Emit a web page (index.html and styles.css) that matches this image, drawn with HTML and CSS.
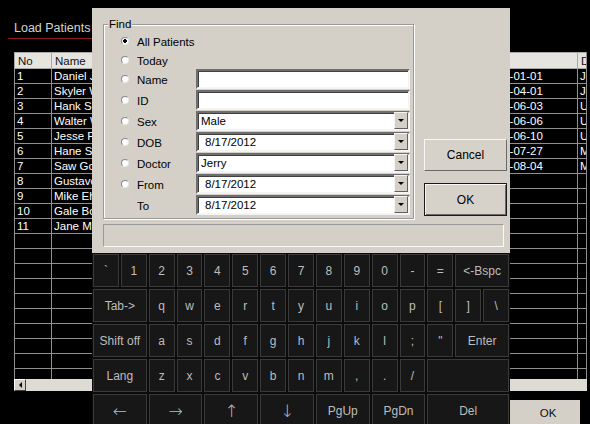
FILE: index.html
```html
<!DOCTYPE html>
<html>
<head>
<meta charset="utf-8">
<link rel="stylesheet" href="styles.css">
</head>
<body>
<div class="main">
  <div class="title">Load Patients</div>
  <div class="grid-wrap">
    <table class="grid">
      <colgroup>
        <col class="c-no"><col class="c-name"><col class="c-sex"><col class="c-dob"><col class="c-addr"><col class="c-date"><col class="c-doc">
      </colgroup>
      <thead>
        <tr><th>No</th><th>Name</th><th>Sex</th><th>DOB</th><th>Address</th><th>Visit</th><th>Doctor</th></tr>
      </thead>
      <tbody>
        <tr><td>1</td><td>Daniel Jackson</td><td>Male</td><td></td><td></td><td>2012-01-01</td><td>Jerry</td></tr>
        <tr><td>2</td><td>Skyler White</td><td>Female</td><td></td><td></td><td>2012-04-01</td><td>Jerry</td></tr>
        <tr><td>3</td><td>Hank Schrader</td><td>Male</td><td></td><td></td><td>2012-06-03</td><td>Uma</td></tr>
        <tr><td>4</td><td>Walter White</td><td>Male</td><td></td><td></td><td>2012-06-06</td><td>Uma</td></tr>
        <tr><td>5</td><td>Jesse Pinkman</td><td>Male</td><td></td><td></td><td>2012-06-10</td><td>Uma</td></tr>
        <tr><td>6</td><td>Hane Schrader</td><td>Female</td><td></td><td></td><td>2012-07-27</td><td>Mark</td></tr>
        <tr><td>7</td><td>Saw Goodman</td><td>Male</td><td></td><td></td><td>2012-08-04</td><td>Mark</td></tr>
        <tr><td>8</td><td>Gustavo Fring</td><td>Male</td><td></td><td></td><td></td><td></td></tr>
        <tr><td>9</td><td>Mike Ehrmantraut</td><td>Male</td><td></td><td></td><td></td><td></td></tr>
        <tr><td>10</td><td>Gale Boetticher</td><td>Male</td><td></td><td></td><td></td><td></td></tr>
        <tr><td>11</td><td>Jane Margolis</td><td>Female</td><td></td><td></td><td></td><td></td></tr>
        <tr><td></td><td></td><td></td><td></td><td></td><td></td><td></td></tr>
        <tr><td></td><td></td><td></td><td></td><td></td><td></td><td></td></tr>
        <tr><td></td><td></td><td></td><td></td><td></td><td></td><td></td></tr>
        <tr><td></td><td></td><td></td><td></td><td></td><td></td><td></td></tr>
        <tr><td></td><td></td><td></td><td></td><td></td><td></td><td></td></tr>
        <tr><td></td><td></td><td></td><td></td><td></td><td></td><td></td></tr>
        <tr><td></td><td></td><td></td><td></td><td></td><td></td><td></td></tr>
        <tr><td></td><td></td><td></td><td></td><td></td><td></td><td></td></tr>
        <tr><td></td><td></td><td></td><td></td><td></td><td></td><td></td></tr>
        <tr><td></td><td></td><td></td><td></td><td></td><td></td><td></td></tr>
        <tr><td></td><td></td><td></td><td></td><td></td><td></td><td></td></tr>
        <tr><td></td><td></td><td></td><td></td><td></td><td></td><td></td></tr>
      </tbody>
    </table>
  </div>
  <div class="hscroll">
    <span class="sb-btn"><span class="tri-left"></span></span>
    <span class="sb-track"></span>
  </div>
  <div class="footer"><span class="main-btn">OK</span></div>
</div>

<div class="dialog">
  <div class="dlg-top">
    <div class="group">
      <span class="group-label">Find</span>
      <div class="form">
        <div class="opt wide"><span class="radio on"></span>All Patients</div>
        <div class="opt wide"><span class="radio"></span>Today</div>

        <div class="opt"><span class="radio"></span>Name</div>
        <div class="field"></div>

        <div class="opt"><span class="radio"></span>ID</div>
        <div class="field"></div>

        <div class="opt"><span class="radio"></span>Sex</div>
        <div class="field combo"><span class="val">Male</span><span class="drop"><span class="tri"></span></span></div>

        <div class="opt"><span class="radio"></span>DOB</div>
        <div class="field combo"><span class="val date">8/17/2012</span><span class="drop"><span class="tri"></span></span></div>

        <div class="opt"><span class="radio"></span>Doctor</div>
        <div class="field combo"><span class="val">Jerry</span><span class="drop"><span class="tri"></span></span></div>

        <div class="opt"><span class="radio"></span>From</div>
        <div class="field combo"><span class="val date">8/17/2012</span><span class="drop"><span class="tri"></span></span></div>

        <div class="opt"><span class="radio blank"></span>To</div>
        <div class="field combo"><span class="val date">8/17/2012</span><span class="drop"><span class="tri"></span></span></div>
      </div>
    </div>
    <div class="buttons">
      <span class="btn">Cancel</span>
      <span class="btn default">OK</span>
    </div>
  </div>
  <div class="status"></div>
</div>

<div class="keyboard">
  <span class="key">`</span><span class="key">1</span><span class="key">2</span><span class="key">3</span><span class="key">4</span><span class="key">5</span><span class="key">6</span><span class="key">7</span><span class="key">8</span><span class="key">9</span><span class="key">0</span><span class="key">-</span><span class="key">=</span><span class="key w2">&lt;-Bspc</span>
  <span class="key w2">Tab-&gt;</span><span class="key">q</span><span class="key">w</span><span class="key">e</span><span class="key">r</span><span class="key">t</span><span class="key">y</span><span class="key">u</span><span class="key">i</span><span class="key">o</span><span class="key">p</span><span class="key">[</span><span class="key">]</span><span class="key">\</span>
  <span class="key w2">Shift off</span><span class="key">a</span><span class="key">s</span><span class="key">d</span><span class="key">f</span><span class="key">g</span><span class="key">h</span><span class="key">j</span><span class="key">k</span><span class="key">l</span><span class="key">;</span><span class="key">"</span><span class="key w2">Enter</span>
  <span class="key w2">Lang</span><span class="key">z</span><span class="key">x</span><span class="key">c</span><span class="key">v</span><span class="key">b</span><span class="key">n</span><span class="key">m</span><span class="key">,</span><span class="key">.</span><span class="key">/</span><span class="key w3"></span>
  <span class="key w2 arrow">&#8592;</span><span class="key w2 arrow">&#8594;</span><span class="key w2 arrow">&#8593;</span><span class="key w2 arrow">&#8595;</span><span class="key w2">PgUp</span><span class="key w2">PgDn</span><span class="key w3">Del</span>
</div>
</body>
</html>
```

FILE: styles.css
```css
html, body {
  margin: 0;
  padding: 0;
  background: #000;
  width: 590px;
  height: 424px;
  overflow: hidden;
  font-family: "Liberation Sans", Arial, sans-serif;
}

.main {
  display: flex;
  flex-direction: column;
  width: 590px;
  height: 424px;
}

.title {
  margin: 20px 0 0 8px;
  width: 200px;
  padding: 0 0 2px 6px;
  font-size: 12.5px;
  line-height: 16px;
  color: #d4d4d4;
  border-bottom: 1px solid #8e1b1b;
}

.grid-wrap {
  margin: 13px 0 0 14px;
  width: 572px;
  height: 341px;
  overflow: hidden;
  border-right: 1px solid #8f8f8f;
}

.grid {
  border-collapse: collapse;
  table-layout: fixed;
  width: 663px;
  font-size: 11.5px;
  color: #fff;
}

.c-no { width: 37px; }
.c-name { width: 110px; }
.c-sex { width: 60px; }
.c-dob { width: 90px; }
.c-addr { width: 167px; }
.c-date { width: 99px; }
.c-doc { width: 100px; }

.grid th {
  height: 15px;
  padding: 0 3px;
  background: #e6e4df;
  color: #111;
  font-weight: normal;
  text-align: left;
  border: 1px solid #a8a8a8;
  line-height: 14px;
  white-space: nowrap;
  overflow: hidden;
}

.grid td {
  height: 14px;
  padding: 0 2px;
  line-height: 14px;
  border: 1px solid #8f8f8f;
  white-space: nowrap;
  overflow: hidden;
}

.grid td:nth-child(6) {
  padding-left: 5px;
}

.hscroll {
  margin-left: 14px;
  width: 573px;
  height: 12px;
  display: flex;
  background: #d4d0c8;
}

.sb-btn {
  width: 10px;
  height: 10px;
  border: 1px solid;
  border-color: #fff #404040 #404040 #fff;
  background: #d4d0c8;
  display: flex;
  align-items: center;
  justify-content: center;
}

.tri-left {
  width: 0;
  height: 0;
  border-top: 3px solid transparent;
  border-bottom: 3px solid transparent;
  border-right: 3px solid #000;
}

.sb-track {
  flex: 1;
  background: #dedbd4;
}

.footer {
  display: flex;
  padding-left: 510px;
  margin-top: 9px;
}

.main-btn {
  width: 70px;
  height: 24px;
  background: #d4d0c8;
  color: #111;
  font-size: 11.5px;
  line-height: 14px;
  text-align: center;
  padding: 6px 0 0 6px;
  box-sizing: border-box;
}

/* dialog */
.dialog {
  position: absolute;
  left: 92px;
  top: 8px;
  width: 418px;
  height: 245px;
  box-sizing: border-box;
  background: #d4d0c8;
  padding: 16px 0 0 11px;
  font-size: 11.5px;
  color: #000;
}

.dlg-top {
  display: flex;
}

.group {
  position: relative;
  width: 311px;
  height: 195px;
  box-sizing: border-box;
  border: 1px solid #9a9a9a;
  box-shadow: 1px 1px 0 #fff, inset 1px 1px 0 #fff;
  padding: 6px 0 0 17px;
}

.group-label {
  position: absolute;
  left: 4px;
  top: -8px;
  padding: 0 1px;
  background: #d4d0c8;
  line-height: 15px;
}

.form {
  display: grid;
  grid-template-columns: 75px 214px;
  grid-template-rows: 20px 18px repeat(7, 21px);
}

.opt {
  display: flex;
  align-items: center;
  padding-top: 1px;
  line-height: 14px;
}

.opt.wide {
  grid-column: 1 / 3;
}

.radio {
  width: 6px;
  height: 6px;
  margin-right: 8px;
  border-radius: 50%;
  background: #fff;
  border: 1px solid;
  border-color: #8a8a8a #e8e8e8 #e8e8e8 #8a8a8a;
  flex: none;
  position: relative;
  top: -1px;
}

.radio.on {
  background: radial-gradient(circle, #000 0 1.6px, #fff 2.1px);
}

.radio.blank {
  visibility: hidden;
}

.field {
  grid-column: 2;
  height: 20px;
  box-sizing: border-box;
  background: #fff;
  border: 2px solid;
  border-color: #6e6e6e #f4f4f4 #f4f4f4 #6e6e6e;
  box-shadow: inset 1px 1px 0 #404040;
  display: flex;
  align-items: center;
}

.val {
  flex: 1;
  padding-left: 3px;
  line-height: 14px;
}

.val.date {
  padding-left: 7px;
}

.drop {
  width: 12px;
  height: 15px;
  margin-right: 0;
  align-self: flex-end;
  background: #d4d0c8;
  border: 1px solid;
  border-color: #f4f4f4 #606060 #606060 #f4f4f4;
  display: flex;
  align-items: center;
  justify-content: center;
}

.tri {
  width: 0;
  height: 0;
  border-left: 3px solid transparent;
  border-right: 3px solid transparent;
  border-top: 3px solid #000;
}

.buttons {
  display: flex;
  flex-direction: column;
  margin-left: 10px;
  padding-top: 115px;
  gap: 12px;
}

.btn {
  width: 83px;
  height: 32px;
  box-sizing: border-box;
  border: 1px solid;
  border-color: #f6f6f6 #6a6a6a #6a6a6a #f6f6f6;
  background: #d6d2ca;
  display: flex;
  align-items: center;
  justify-content: center;
  font-size: 12px;
}

.btn.default {
  height: 33px;
  border: 1px solid #1a1a1a;
  box-shadow: inset 1px 1px 0 #f6f6f6, inset -1px -1px 0 #6a6a6a;
}

.status {
  margin-top: 5px;
  width: 401px;
  height: 23px;
  box-sizing: border-box;
  border: 1px solid;
  border-color: #9a9a9a #fafafa #fafafa #9a9a9a;
}

/* keyboard */
.keyboard {
  position: absolute;
  left: 92px;
  top: 253px;
  width: 418px;
  height: 171px;
  box-sizing: border-box;
  padding: 1px 1px 0 1px;
  background: #0b0b0b;
  display: grid;
  grid-template-columns: repeat(15, 1fr);
  grid-template-rows: repeat(5, 33px);
  gap: 2px;
  overflow: hidden;
}

.key {
  box-sizing: border-box;
  border: 1px solid #3a3a3a;
  background: #171717;
  color: #bdbdbd;
  font-size: 12px;
  display: flex;
  align-items: center;
  justify-content: center;
}

.key.w2 { grid-column: span 2; }
.key.w3 { grid-column: span 3; }

.key.arrow {
  font-family: "DejaVu Sans", sans-serif;
  font-size: 17px;
  font-weight: 200;
}
```
